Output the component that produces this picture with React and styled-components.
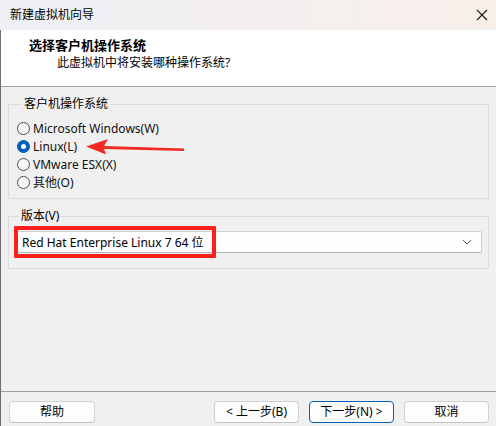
import styled, { createGlobalStyle } from "styled-components";

const GlobalStyle = createGlobalStyle`
  html, body {
    margin: 0;
    padding: 0;
    background: #f0f0f0;
  }
  body {
    font-family: "Noto Sans", "Noto Sans CJK SC", sans-serif;
    font-size: 12px;
    color: #000;
  }
  * {
    box-sizing: border-box;
  }
`;

const Window = styled.div`
  position: relative;
  width: 496px;
  height: 426px;
  display: flex;
  flex-direction: column;
  background: #f0f0f0;
  overflow: hidden;
`;

const TitleBar = styled.div`
  height: 30px;
  display: flex;
  align-items: center;
  justify-content: space-between;
  padding: 0 8px 1px 10px;
  background: linear-gradient(90deg, #eef0f6 0%, #f3eff0 45%, #f8efe9 100%);
  line-height: 16px;
`;

const Frame = styled.div`
  flex: 1;
  display: flex;
  flex-direction: column;
  border-left: 1px solid #6f6f6f;
`;

const Header = styled.div`
  height: 57px;
  background: #fff;
  border-bottom: 1px solid #a0a0a0;
  padding: 7px 0 0 28px;
  line-height: 17px;
`;

const HeaderTitle = styled.div`
  font-weight: 700;
  font-size: 13px;
`;

const HeaderSub = styled.div`
  padding-left: 28px;
`;

const Body = styled.div`
  flex: 1;
  padding: 9px 7px 0 7px;
  display: flex;
  flex-direction: column;
  gap: 9px;
`;

const Group = styled.fieldset`
  margin: 0;
  padding: ${(p) => p.$pad};
  border: 1px solid #dcdcdc;
  border-radius: 1px;
  min-width: 0;

  legend {
    margin-left: 5px;
    padding: 0 2px;
    line-height: 16px;
  }
`;

const RadioRow = styled.label`
  display: flex;
  align-items: center;
  gap: 3px;
  height: 18px;
  color: #111;
`;

const RadioDot = styled.span`
  width: 13px;
  height: 13px;
  border-radius: 50%;
  flex: none;
  border: 1px solid ${(p) => (p.$on ? "#005fb8" : "#4d4d4d")};
  background: ${(p) => (p.$on ? "#005fb8" : "#f7f7f7")};
  display: flex;
  align-items: center;
  justify-content: center;

  &::after {
    content: "";
    width: 5px;
    height: 5px;
    border-radius: 50%;
    background: #fff;
    display: ${(p) => (p.$on ? "block" : "none")};
  }
`;

const SelectWrap = styled.div`
  position: relative;
`;

const Select = styled.div`
  height: 22px;
  display: flex;
  align-items: center;
  justify-content: space-between;
  padding: 0 9px 0 7px;
  background: #fdfdfd;
  border: 1px solid #cfcfcf;
  border-bottom-color: #b5b5b5;
  border-radius: 2px;
`;

const RedBox = styled.div`
  position: absolute;
  left: 0;
  top: -5px;
  width: 202px;
  height: 32px;
  border: 4px solid #fe1e1e;
  border-radius: 1px;
  pointer-events: none;
`;

const Footer = styled.div`
  border-top: 1px solid #a0a0a0;
  padding: 9px 7px 3px 8px;
  display: flex;
  align-items: center;
`;

const Spacer = styled.div`
  flex: 1;
`;

const Button = styled.button`
  width: ${(p) => p.$w || 85}px;
  height: 22px;
  margin-left: ${(p) => p.$ml || 0}px;
  font: inherit;
  line-height: 16px;
  color: #000;
  background: #fdfdfd;
  border: 1px solid ${(p) => (p.$primary ? "#005fb8" : "#d0d0d0")};
  border-bottom-color: ${(p) => (p.$primary ? "#005fb8" : "#c2c2c2")};
  border-radius: 4px;
  padding: 0;
  cursor: pointer;
`;

const ArrowMark = styled.svg`
  position: absolute;
  left: 80px;
  top: 134px;
  pointer-events: none;
`;

const CloseIcon = () => (
  <svg width="12" height="12" viewBox="0 0 12 12">
    <path d="M1 1 L11 11 M11 1 L1 11" stroke="#1a1a1a" strokeWidth="1.1" />
  </svg>
);

const Chevron = () => (
  <svg width="10" height="6" viewBox="0 0 10 6">
    <path d="M1 1 L5 5 L9 1" stroke="#5a5a5a" strokeWidth="1" fill="none" />
  </svg>
);

const osList = [
  { label: "Microsoft Windows(W)" },
  { label: "Linux(L)", on: true },
  { label: "VMware ESX(X)" },
  { label: "其他(O)" },
];

export default function App() {
  return (
    <>
      <GlobalStyle />
      <Window>
        <TitleBar>
          <span>新建虚拟机向导</span>
          <CloseIcon />
        </TitleBar>
        <Frame>
          <Header>
            <HeaderTitle>选择客户机操作系统</HeaderTitle>
            <HeaderSub>此虚拟机中将安装哪种操作系统?</HeaderSub>
          </Header>
          <Body>
            <Group $pad="7px 8px 7px 8px">
              <legend>客户机操作系统</legend>
              {osList.map((os) => (
                <RadioRow key={os.label}>
                  <RadioDot $on={os.on} />
                  {os.label}
                </RadioRow>
              ))}
            </Group>
            <Group $pad="7px 6px 15px 5px">
              <legend>版本(V)</legend>
              <SelectWrap>
                <Select>
                  <span>Red Hat Enterprise Linux 7 64 位</span>
                  <Chevron />
                </Select>
                <RedBox />
              </SelectWrap>
            </Group>
          </Body>
          <Footer>
            <Button $w={86}>帮助</Button>
            <Spacer />
            <Button>&lt; 上一步(B)</Button>
            <Button $ml={10} $primary>
              下一步(N) &gt;
            </Button>
            <Button $ml={10}>取消</Button>
          </Footer>
        </Frame>
        <ArrowMark width="110" height="25" viewBox="0 0 110 25">
          <path
            d="M6 12.5 L28 5 L24 12 L104 14.5 L104 17 L24 15 L26 20.5 Z"
            fill="#f22a22"
          />
        </ArrowMark>
      </Window>
    </>
  );
}
